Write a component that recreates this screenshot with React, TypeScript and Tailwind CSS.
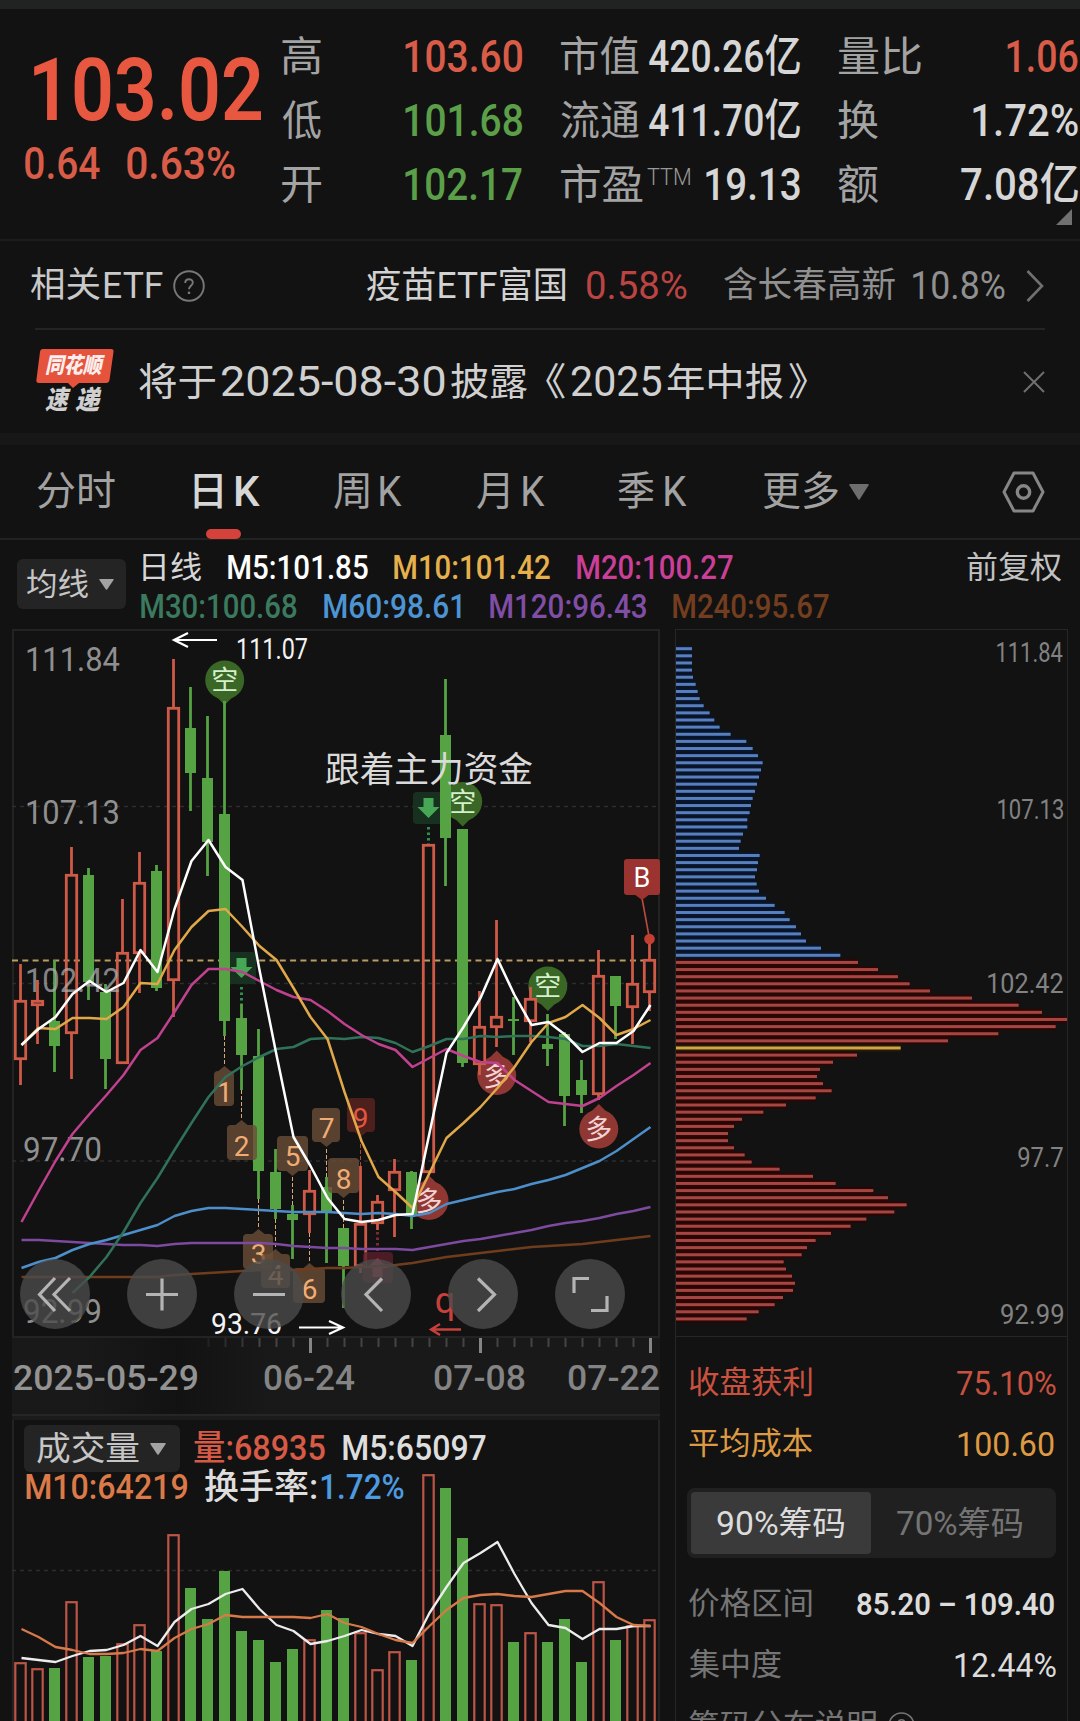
import React, { useLayoutEffect, useRef } from 'react';

/* Stretches a line of text horizontally so its ink fills the width of its box. */
function Fit({ className, children }: { className: string; children: string }) {
  const box = useRef<HTMLSpanElement>(null);
  const inner = useRef<HTMLSpanElement>(null);
  useLayoutEffect(() => {
    const b = box.current!;
    const t = inner.current!;
    const cs = getComputedStyle(t);
    const ctx = document.createElement('canvas').getContext('2d')!;
    ctx.font = `${cs.fontStyle} ${cs.fontWeight} ${cs.fontSize} ${cs.fontFamily}`;
    const m = ctx.measureText(children);
    const ink = m.actualBoundingBoxRight + m.actualBoundingBoxLeft;
    const s = b.clientWidth / ink;
    t.style.transform = `translateX(${m.actualBoundingBoxLeft * s}px) scaleX(${s})`;
  }, [children]);
  return (
    <span ref={box} className={`block shrink-0 whitespace-nowrap ${className}`}>
      <span ref={inner} className="inline-block origin-left">{children}</span>
    </span>
  );
}

const X0 = 20.5;
const STEP = 17;

type Candle = [up: number, high: number, top: number, bottom: number, low: number];
const candles: Candle[] = [
  [1, 964, 1000, 1060, 1085], [1, 980, 1000, 1006, 1044], [0, 960, 1021, 1046, 1072], [1, 847, 874, 1034, 1079],
  [0, 868, 875, 982, 1000], [0, 984, 992, 1059, 1089], [1, 899, 952, 1064, 1064], [1, 852, 882, 954, 993],
  [0, 865, 871, 988, 991], [1, 659, 707, 981, 1017], [0, 687, 728, 773, 811], [0, 716, 778, 842, 876],
  [0, 701, 814, 1021, 1036], [0, 1004, 1018, 1055, 1090], [0, 1029, 1056, 1171, 1199], [0, 1149, 1172, 1209, 1219],
  [0, 1205, 1214, 1220, 1259], [1, 1170, 1190, 1215, 1233], [0, 1177, 1187, 1213, 1263], [0, 1228, 1228, 1266, 1308],
  [1, 1166, 1223, 1267, 1273], [1, 1195, 1201, 1224, 1230], [1, 1159, 1171, 1191, 1237], [0, 1171, 1172, 1215, 1229],
  [1, 844, 844, 1173, 1173], [0, 679, 735, 838, 886], [0, 829, 829, 1063, 1067], [1, 991, 1026, 1065, 1075],
  [1, 920, 1016, 1028, 1047], [0, 997, 1019, 1021, 1055], [1, 987, 998, 1022, 1042], [0, 1014, 1044, 1049, 1066],
  [0, 1032, 1034, 1096, 1126], [0, 1060, 1080, 1095, 1113], [1, 950, 975, 1095, 1100], [0, 976, 976, 1006, 1039],
  [1, 935, 983, 1008, 1044], [1, 935, 959, 993, 1011],
];

const ma5 = [1045, 1029, 1017, 994, 981, 992, 983, 950, 972, 909, 861, 840, 867, 880, 970, 1055, 1137, 1166, 1198, 1219, 1222, 1220, 1215, 1214, 1133, 1053, 1027, 998, 959, 995, 1025, 1022, 1035, 1052, 1043, 1043, 1031, 1005];
const ma10 = [1045, 1028, 1029, 1018, 1018, 1019, 1007, 983, 984, 950, 927, 911, 909, 927, 946, 960, 988, 1017, 1039, 1092, 1141, 1177, 1192, 1208, 1173, 1138, 1123, 1107, 1088, 1067, 1042, 1023, 1017, 1005, 1018, 1035, 1029, 1020];
const ma20 = [1222, 1191, 1161, 1134, 1114, 1095, 1075, 1050, 1038, 1012, 985, 969, 969, 972, 981, 990, 997, 1000, 1011, 1024, 1035, 1044, 1050, 1067, 1058, 1049, 1056, 1062, 1063, 1080, 1091, 1102, 1104, 1106, 1098, 1086, 1075, 1063];
const ma30 = [1293, 1277, 1257, 1232, 1203, 1178, 1150, 1123, 1097, 1077, 1066, 1057, 1049, 1047, 1039, 1038, 1039, 1037, 1038, 1043, 1052, 1046, 1039, 1039, 1036, 1037, 1036, 1036, 1037, 1039, 1046, 1046, 1044, 1046, 1048];
const ma60 = [1268, 1262, 1258, 1250, 1244, 1240, 1235, 1230, 1225, 1216, 1211, 1208, 1208, 1209, 1210, 1211, 1212, 1212, 1212, 1213, 1214, 1213, 1214, 1216, 1213, 1204, 1200, 1196, 1192, 1189, 1184, 1180, 1175, 1168, 1161, 1151, 1139, 1127];
const ma120 = [1240, 1240, 1241, 1242, 1243, 1244, 1245, 1245, 1246, 1244, 1243, 1243, 1243, 1243, 1243, 1244, 1246, 1247, 1248, 1248, 1249, 1249, 1249, 1250, 1247, 1244, 1241, 1239, 1236, 1233, 1230, 1226, 1223, 1221, 1218, 1214, 1211, 1207];
const ma240 = [1277, 1277, 1277, 1277, 1277, 1277, 1277, 1277, 1277, 1275, 1274, 1273, 1272, 1271, 1270, 1270, 1270, 1269, 1268, 1268, 1267, 1266, 1265, 1263, 1260, 1257, 1255, 1253, 1251, 1249, 1247, 1246, 1245, 1244, 1242, 1240, 1238, 1236];

const volumes = [1662, 1668, 1668, 1601, 1657, 1656, 1643, 1624, 1651, 1534, 1588, 1619, 1571, 1631, 1640, 1662, 1649, 1639, 1610, 1618, 1632, 1669, 1651, 1660, 1474, 1488, 1538, 1603, 1604, 1642, 1632, 1642, 1619, 1662, 1581, 1640, 1625, 1619];
const vol5 = [1658, 1660, 1662, 1656, 1651, 1650, 1645, 1636, 1646, 1622, 1609, 1604, 1594, 1589, 1609, 1625, 1631, 1644, 1641, 1636, 1630, 1634, 1636, 1646, 1613, 1587, 1563, 1553, 1542, 1574, 1603, 1625, 1628, 1639, 1629, 1629, 1626, 1626];
const vol10 = [1629, 1637, 1647, 1650, 1654, 1654, 1653, 1649, 1651, 1638, 1629, 1624, 1615, 1617, 1617, 1617, 1617, 1618, 1614, 1623, 1627, 1634, 1640, 1643, 1626, 1610, 1598, 1595, 1594, 1596, 1597, 1594, 1591, 1591, 1603, 1617, 1625, 1626];

/* Chip distribution, bar ends in thirds of a pixel. */
const chips = [
  96, 96, 96, 96, 99, 107, 113, 119, 131, 149, 163, 179, 212, 259, 278, 294, 308, 303, 297, 291, 285, 278, 273, 269, 262, 262, 249, 242, 237, 299, 294, 291, 285, 290, 297, 318, 344, 374, 389, 408, 423, 438, 483, 541,
  594, 654, 714, 749, 810, 936, 1076, 1146, 1221, 1187, 1015, 864, 722,
  591, 519, 480, 471, 489, 515, 467, 378, 310, 246, 222, 204, 204, 222, 254, 275, 359, 459, 527, 640, 684, 740, 703, 619, 572, 513, 467, 441, 425, 371, 378, 396, 405, 399, 369, 344, 296, 260,
];

function Line({ data, color, start = 0, width = 2.5 }: { data: number[]; color: string; start?: number; width?: number }) {
  return (
    <polyline
      fill="none"
      stroke={color}
      strokeWidth={width}
      strokeLinejoin="round"
      points={data.map((y, i) => `${X0 + 1 + STEP * (i + start)},${y}`).join(' ')}
    />
  );
}

function T({ x, y, w, size, fill, weight = 400, children }: { x: number; y: number; w: number; size: number; fill: string; weight?: number; children: string }) {
  return (
    <text x={x - 2} y={y} textLength={w + 4} lengthAdjust="spacingAndGlyphs" fontSize={size} fontWeight={weight} fill={fill}>
      {children}
    </text>
  );
}

function Pin({ x, y, short }: { x: number; y: number; short?: boolean }) {
  const color = short ? '#3a6626' : '#8f3733';
  return (
    <g>
      <path fill={color} d={short ? `M${x - 9} ${y + 16}L${x} ${y + 25}L${x + 9} ${y + 16}z` : `M${x - 9} ${y - 16}L${x} ${y - 25}L${x + 9} ${y - 16}z`} />
      <circle cx={x} cy={y} r={19.5} fill={color} />
      <text x={x} y={y + 10} textAnchor="middle" fontSize={27} fill={short ? '#d5f0cc' : '#f3d3d3'}>
        {short ? '空' : '多'}
      </text>
    </g>
  );
}

type Mark = { n: string; l: number; r: number; t: number; b: number; cx: number; from: number; base: number; up?: boolean; red?: boolean };
const marks: Mark[] = [
  { n: '1', l: 214, r: 234, t: 1071, b: 1106, cx: 224.5, from: 1036, base: 1102, up: true },
  { n: '2', l: 227, r: 257, t: 1125, b: 1160, cx: 241.5, from: 1090, base: 1156, up: true },
  { n: '3', l: 243, r: 273, t: 1234, b: 1269, cx: 258.5, from: 1199, base: 1264, up: true },
  { n: '4', l: 261, r: 290, t: 1254, b: 1288, cx: 275.5, from: 1219, base: 1285, up: true },
  { n: '5', l: 277, r: 308, t: 1136, b: 1171, cx: 292.5, from: 1205, base: 1166 },
  { n: '6', l: 293, r: 325, t: 1268, b: 1303, cx: 309.5, from: 1233, base: 1299, up: true },
  { n: '7', l: 312, r: 340, t: 1108, b: 1142, cx: 326.5, from: 1177, base: 1138 },
  { n: '8', l: 328, r: 359, t: 1158, b: 1193, cx: 343.5, from: 1228, base: 1189 },
  { n: '9', l: 347, r: 375, t: 1098, b: 1132, cx: 360.5, from: 1166, base: 1128, red: true },
];

function NumberMark({ m }: { m: Mark }) {
  const bg = m.red ? '#5c2320' : '#6b4e37';
  const tip = m.up ? m.t - 5 : m.b + 5;
  const edge = m.up ? m.t : m.b;
  return (
    <g>
      <line x1={m.cx} x2={m.cx} y1={m.from} y2={tip} stroke={m.red ? '#a8483a' : '#d9a878'} strokeWidth={1} strokeDasharray="4 2" />
      <g fill={bg} fillOpacity={0.8}>
        <path d={`M${m.cx - 6} ${edge}L${m.cx} ${tip}L${m.cx + 6} ${edge}z`} />
        <rect x={m.l} y={m.t} width={m.r - m.l} height={m.b - m.t} rx={4} />
      </g>
      <text x={m.cx} y={m.base} textAnchor="middle" fontSize={28} fill={m.red ? '#e4573e' : '#efad75'}>{m.n}</text>
    </g>
  );
}

function DownFlag({ x, y, w }: { x: number; y: number; w: number }) {
  return (
    <g>
      <rect x={x - w / 2} y={y} width={w} height={32} rx={4} fill="#18301f" />
      <path fill="#46a755" d={`M${x - 5} ${y + 6}h10v9h6L${x} ${y + 26}L${x - 11} ${y + 15}h6z`} />
      <line x1={x} x2={x} y1={y + 35} y2={y + 52} stroke="#2f8f50" strokeWidth={3} strokeDasharray="2.5 3" />
    </g>
  );
}

function PriceChart() {
  return (
    <svg className="block h-[708px] w-[648px]" viewBox="12 629 648 708" fontFamily='Roboto, "Noto Sans CJK SC", sans-serif'>
      <g stroke="#2d2d2d" strokeWidth={1.5} strokeDasharray="4 4">
        <line x1={12} x2={660} y1={806.5} y2={806.5} />
        <line x1={12} x2={660} y1={983.5} y2={983.5} />
        <line x1={12} x2={660} y1={1161} y2={1161} />
      </g>
      <line x1={12} x2={645} y1={960.5} y2={960.5} stroke="#b99c62" strokeWidth={1.8} strokeDasharray="6 4.3" />

      <Pin x={224.7} y={680} short />
      <Pin x={462.7} y={801.5} short />
      <Pin x={547.8} y={986} short />
      <Pin x={496.7} y={1075.5} />
      <Pin x={598.8} y={1129} />
      <Pin x={429} y={1200.5} />
      <DownFlag x={428.5} y={792} w={31} />
      <DownFlag x={241.5} y={952} w={29} />

      {candles.map(([up, high, top, bottom, low], i) => {
        const x = X0 + STEP * i;
        return up ? (
          <g key={i} stroke="#cf5a47" strokeWidth={2.8} fill="none">
            {high < top && <line x1={x} x2={x} y1={high} y2={top} />}
            {low > bottom && <line x1={x} x2={x} y1={bottom} y2={low} />}
            <rect x={x - 5.2} y={top + 1.3} width={10.4} height={Math.max(bottom - top - 2.6, 2)} />
          </g>
        ) : (
          <g key={i} fill="#56a344">
            <rect x={x - 1.4} y={high} width={2.8} height={low - high} />
            <rect x={x - 5.5} y={top} width={11} height={bottom - top} />
          </g>
        );
      })}

      <line x1={377.5} x2={377.5} y1={1232} y2={1251} stroke="#7d2a35" strokeWidth={3} strokeDasharray="2.5 3" />
      <rect x={363} y={1252} width={30} height={31} rx={4} fill="#5a1f2b" fillOpacity={0.8} />
      <path fill="#b03a4c" d="M377.5 1258l11 10h-6v9h-10v-9h-6z" />

      <T x={27} y={671} w={91} size={34} fill="#8f8f8f">111.84</T>
      <T x={27} y={824} w={91} size={34} fill="#8f8f8f">107.13</T>
      <g opacity={0.75}><T x={27} y={992} w={91} size={34} fill="#ababab">102.42</T></g>
      <T x={25} y={1161} w={75} size={34} fill="#8f8f8f">97.70</T>
      <T x={25} y={1323} w={75} size={34} fill="#8f8f8f">92.99</T>

      {marks.map((m) => <NumberMark key={m.n} m={m} />)}

      <Line data={ma240} color="#6f3d1e" />
      <Line data={ma120} color="#7c4a9e" />
      <Line data={ma60} color="#4d8fca" />
      <Line data={ma30} color="#2f7259" start={3} />
      <Line data={ma20} color="#c0428f" />
      <Line data={ma10} color="#e0a848" />
      <Line data={ma5} color="#ffffff" />

      <T x={327} y={782} w={204} size={35} fill="#dadada">跟着主力资金</T>
      <path d="M217 640H174M188 633L174 640L188 647" stroke="#fff" strokeWidth={2.2} fill="none" />
      <T x={238} y={659} w={68} size={29.5} fill="#f4f4f4">111.07</T>
      <path d="M299 1327.5H343M329 1321L343 1327.5L329 1334" stroke="#fff" strokeWidth={2.2} fill="none" />
      <T x={213} y={1334} w={67} size={29.5} fill="#f4f4f4">93.76</T>

      <path d="M642 898L649.5 939" stroke="#bd4a3e" strokeWidth={1.6} />
      <circle cx={649.5} cy={939} r={5.3} fill="#c33e33" />
      <rect x={624} y={859} width={36} height={36} rx={3} fill="#9b3431" />
      <path d="M634 894L642 900L650 894z" fill="#9b3431" />
      <text x={642} y={887} textAnchor="middle" fontSize={27} fill="#fff">B</text>

      <text x={445} y={1313} textAnchor="middle" fontSize={36} fill="#c8403a">q</text>
      <path d="M461 1329.5H432M440 1324L431 1329.5L440 1335" stroke="#c8403a" strokeWidth={2.4} fill="none" />

      <g fill="#4b4b4b" fillOpacity={0.8}>
        {[55, 162, 269, 376, 483, 590].map((x) => <circle key={x} cx={x} cy={1294} r={35} />)}
      </g>
      <g stroke="#b4b4b4" strokeWidth={3.2} fill="none">
        <path d="M55 1278L39.5 1294.5L55 1311M70 1278L54 1294.5L70 1311" />
        <path d="M146 1294.5H178M162 1278.5V1310.5M253 1294.5H285" />
        <path d="M382 1278.5L366 1294.5L382 1311M478 1278.5L494.5 1294.5L478 1311" />
        <path d="M574 1293V1278.5H589M607 1296V1310.5H591" />
      </g>
    </svg>
  );
}

function VolumeChart() {
  return (
    <svg className="block h-[306px] w-[648px]" viewBox="12 1415 648 306">
      <line x1={12} x2={660} y1={1570.5} y2={1570.5} stroke="#2d2d2d" strokeWidth={1.5} strokeDasharray="4 4" />
      {volumes.map((y, i) => {
        const x = X0 + STEP * i;
        return candles[i][0] ? (
          <rect key={i} x={x - 5.2} y={y + 1.2} width={10.4} height={80 + 1721 - y} fill="none" stroke="#bd5546" strokeWidth={2.2} />
        ) : (
          <rect key={i} x={x - 5.5} y={y} width={11} height={1721 - y} fill="#56a344" />
        );
      })}
      <Line data={vol5} color="#ececec" width={2.3} />
      <Line data={vol10} color="#d8794a" width={2.3} />
    </svg>
  );
}

function ChipChart() {
  return (
    <svg className="absolute inset-0 h-[706px] w-[391px]" viewBox="676 630 391 706">
      {chips.map((end, i) => {
        const y = 648.7 + i * 7.13;
        const w = end / 3 - 16;
        const bar = i < 44 ? '#587fbd' : i === 56 ? '#cfa545' : '#a54642';
        const halo = i < 44 ? '#08152a' : i === 56 ? '#251a06' : '#2a0705';
        return (
          <g key={i}>
            <rect x={676} y={y - 3.5} width={w} height={7.2} fill={halo} />
            <rect x={676} y={y - 1.5} width={w} height={3} fill={bar} />
          </g>
        );
      })}
    </svg>
  );
}

function Stat({ label, lw, value, vw, tone, sup }: { label: string; lw: string; value: string; vw: string; tone: string; sup?: boolean }) {
  return (
    <div className="flex h-16 items-center justify-between">
      <div className="flex items-center">
        <Fit className={`text-[41px] leading-none text-[#a3a3a3] ${lw}`}>{label}</Fit>
        {sup && <Fit className="mb-[15px] ml-1 w-[43px] text-[23px] font-light leading-none text-[#999]">TTM</Fit>}
      </div>
      <Fit className={`text-[44px] font-medium leading-none ${tone} ${vw}`}>{value}</Fit>
    </div>
  );
}

function Caret({ className }: { className: string }) {
  return <svg className={className} viewBox="0 0 20 16" preserveAspectRatio="none"><path d="M1 0h18q1 0 .6 1.2L10.8 15.3q-.8 1-1.6 0L.4 1.2Q0 0 1 0z" fill="currentColor" /></svg>;
}

function Help({ className }: { className: string }) {
  return (
    <svg className={className} viewBox="0 0 32 32" fill="none" stroke="currentColor" strokeWidth={1.9}>
      <circle cx={16} cy={16} r={14.8} />
      <path d="M12.2 13c0-5 7.6-5 7.6-.4 0 3-3.8 3.400-3.8 6.600" />
      <path d="M16 21.600v2.400" strokeWidth={2.4} />
    </svg>
  );
}

function Header() {
  return (
    <section className="flex h-[232px] border-b-2 border-[#1d1d1d]">
      <div className="flex w-[282px] flex-col pt-[36px]">
        <Fit className="ml-[34px] w-[227px] text-[88px] font-semibold leading-[90px] text-[#e8573f]">103.02</Fit>
        <div className="mt-1 flex h-[48px] items-center">
          <Fit className="ml-[25px] w-[75px] text-[45px] font-medium leading-none text-[#d85c48]">0.64</Fit>
          <Fit className="ml-[27px] w-[108px] text-[45px] font-medium leading-none text-[#d85c48]">0.63%</Fit>
        </div>
      </div>
      <div className="w-[240px] pt-4">
        <Stat label="高" lw="w-[39px]" value="103.60" vw="w-[117px]" tone="text-[#d85c48]" />
        <Stat label="低" lw="w-[39px]" value="101.68" vw="w-[117px]" tone="text-[#5ba049]" />
        <Stat label="开" lw="w-[39px]" value="102.17" vw="w-[117px]" tone="text-[#5ba049]" />
      </div>
      <div className="ml-[39px] w-[239px] pt-4">
        <Stat label="市值" lw="w-[78px]" value="420.26亿" vw="w-[151px]" tone="text-[#d6d6d6]" />
        <Stat label="流通" lw="w-[78px]" value="411.70亿" vw="w-[151px]" tone="text-[#d6d6d6]" />
        <Stat label="市盈" lw="w-[82px]" value="19.13" vw="w-[94px]" tone="text-[#d6d6d6]" sup />
      </div>
      <div className="relative ml-[38px] w-[240px] pt-4">
        <Stat label="量比" lw="w-[83px]" value="1.06" vw="w-[71px]" tone="text-[#d85c48]" />
        <Stat label="换" lw="w-[40px]" value="1.72%" vw="w-[105px]" tone="text-[#d6d6d6]" />
        <Stat label="额" lw="w-[40px]" value="7.08亿" vw="w-[117px]" tone="text-[#d6d6d6]" />
        <svg className="absolute right-[6px] top-[200px] h-4 w-4" viewBox="0 0 16 16"><path d="M16 0V16H0z" fill="#707070" /></svg>
      </div>
    </section>
  );
}

function EtfRow() {
  return (
    <section className="flex h-[87px] items-center pl-[31px] pt-[2px]">
      <Fit className="w-[69px] text-[35px] leading-none text-[#c9c9c9]">相关</Fit>
      <Fit className="ml-[5px] w-[58px] text-[37px] leading-none text-[#c9c9c9]">ETF</Fit>
      <Help className="ml-[10px] h-[32px] w-[32px] text-[#777]" />
      <Fit className="ml-[162px] w-[198px] text-[36px] leading-none text-[#d2d2d2]">疫苗ETF富国</Fit>
      <Fit className="ml-[22px] w-[100px] text-[38px] leading-none text-[#bb4443]">0.58%</Fit>
      <Fit className="ml-[37px] w-[171px] text-[35px] leading-none text-[#909090]">含长春高新</Fit>
      <Fit className="ml-[18px] w-[92px] text-[38px] leading-none text-[#909090]">10.8%</Fit>
      <svg className="ml-[21px] h-[34px] w-[18px]" viewBox="0 0 18 34" fill="none" stroke="#707070" strokeWidth={2.6}><path d="M1.500 2L16 17L1.500 32" /></svg>
    </section>
  );
}

function NoticeRow() {
  return (
    <section className="mx-[35px] flex h-[105px] border-t-2 border-[#242424]">
      <div className="relative w-[104px]">
        <svg className="absolute left-[1px] top-[19px] h-[39px] w-[78px]" viewBox="0 0 78 39"><path d="M7 0H75q3 0 2.500 3L73.500 31q-.5 3-3.500 3H43l-6 5-5-5H3q-3 0-2.600-3L4 3q.4-3 3-3z" fill="#e6533c" /></svg>
        <Fit className="absolute left-[10px] top-[23px] w-[60px] text-[22px] font-black italic leading-[26px] text-[#fbeeec]">同花顺</Fit>
        <Fit className="absolute left-[10px] top-[57px] w-[26px] text-[26px] font-black italic leading-[26px] text-[#cfcfcf]">速</Fit>
        <Fit className="absolute left-[40px] top-[57px] w-[27px] text-[26px] font-black italic leading-[26px] text-[#cfcfcf]">递</Fit>
      </div>
      <div className="flex h-[103px] flex-1 items-center text-[#d0d0d0]">
        <Fit className="w-[76px] text-[38px] leading-none">将于</Fit>
        <Fit className="ml-[6px] w-[224px] text-[42px] leading-none">2025-08-30</Fit>
        <Fit className="ml-[6px] w-[76px] text-[38px] leading-none">披露</Fit>
        <Fit className="ml-[19px] w-[19px] text-[38px] leading-none">《</Fit>
        <Fit className="ml-[6px] w-[90px] text-[42px] leading-none">2025</Fit>
        <Fit className="ml-[6px] w-[116px] text-[38px] leading-none">年中报</Fit>
        <Fit className="ml-[6px] w-[18px] text-[38px] leading-none">》</Fit>
        <svg className="ml-auto h-[22px] w-[22px]" viewBox="0 0 22 22" stroke="#6f6f6f" strokeWidth={2}><path d="M1 1L21 21M21 1L1 21" /></svg>
      </div>
    </section>
  );
}

function Tabs() {
  const tab = 'text-[40px] leading-none';
  const letter = 'text-[42px] leading-none w-[22px] ml-[11px]';
  return (
    <nav className="flex h-[95px] items-center border-b-2 border-[#222] pl-[37px] pt-[1px] text-[#a2a2a2]">
      <Fit className={`${tab} w-[78px]`}>分时</Fit>
      <div className="relative ml-[79px] flex text-[#d6d6d6]">
        <Fit className={`${tab} w-[28px] font-medium`}>日</Fit>
        <Fit className="ml-[14px] w-[24px] text-[42px] font-medium leading-[40px]">K</Fit>
        <span className="absolute left-[12px] top-[57px] h-[10px] w-[35px] rounded-full bg-[#d5423c]" />
      </div>
      <Fit className={`${tab} ml-[74px] w-[35px]`}>周</Fit>
      <Fit className={letter}>K</Fit>
      <Fit className={`${tab} ml-[75px] w-[31px]`}>月</Fit>
      <Fit className={`${letter} ml-[15px]`}>K</Fit>
      <Fit className={`${tab} ml-[73px] w-[36px]`}>季</Fit>
      <Fit className={letter}>K</Fit>
      <Fit className={`${tab} ml-[76px] w-[75px]`}>更多</Fit>
      <Caret className="ml-[11px] h-[16px] w-[20px] text-[#6e6e6e]" />
      <svg className="ml-auto mr-[35px] h-[42px] w-[43px]" viewBox="0 0 43 42" fill="none" stroke="#868686" strokeWidth={3} strokeLinejoin="round">
        <path d="M12 2H31L41 21L31 40H12L2 21z" />
        <circle cx={21.500} cy={21} r={6.200} strokeWidth={3.400} />
      </svg>
    </nav>
  );
}

function MovingAverages() {
  const row = 'flex h-[39px] items-center text-[33px] font-medium leading-none';
  return (
    <section className="flex h-[89px] pl-[17px] pt-[7px]">
      <div className="mt-[12px] flex h-[50px] w-[109px] items-center rounded-md bg-[#242424] pl-[10px]">
        <Fit className="w-[61px] text-[31px] leading-none text-[#c6c6c6]">均线</Fit>
        <Caret className="ml-[11px] h-[11px] w-[15px] text-[#a3a3a3]" />
      </div>
      <div className="ml-[15px] pt-[1px]">
        <div className={row}>
          <Fit className="ml-[2px] w-[58px] text-[31px] font-normal text-[#d6d6d6]">日线</Fit>
          <Fit className="ml-[27px] w-[140px] text-white">M5:101.85</Fit>
          <Fit className="ml-[26px] w-[156px] text-[#e6b04c]">M10:101.42</Fit>
          <Fit className="ml-[27px] w-[156px] text-[#cb3f98]">M20:100.27</Fit>
        </div>
        <div className={row}>
          <Fit className="w-[156px] text-[#3b7a5e]">M30:100.68</Fit>
          <Fit className="ml-[27px] w-[137px] text-[#4d94d2]">M60:98.61</Fit>
          <Fit className="ml-[29px] w-[156px] text-[#814ea6]">M120:96.43</Fit>
          <Fit className="ml-[27px] w-[156px] text-[#733e1f]">M240:95.67</Fit>
        </div>
      </div>
      <Fit className="ml-[138px] mt-[4px] w-[94px] text-[31px] leading-[34px] text-[#c2c2c2]">前复权</Fit>
    </section>
  );
}

function DateAxis() {
  const ticks = Array.from({ length: 27 }, (_, i) => i);
  return (
    <div className="relative h-[76px] bg-[#191919]">
      <div className="absolute inset-y-0 left-[70px] w-[190px] bg-gradient-to-r from-[#191919] via-[#121212] to-[#191919]" />
      <svg className="absolute left-0 top-0 h-4 w-[650px]" viewBox="12 1338 650 16">
        {ticks.map((i) => {
          const major = i === 6 || i === 16 || i === 26;
          return <rect key={i} x={(major ? 207 : 207.500) + i * 17} y={1338} width={major ? 3 : 2} height={major ? 15 : 9} fill={major ? '#858585' : '#444'} fillOpacity={i < 3 && !major ? 0.3 + i * 0.2 : 1} />;
        })}
      </svg>
      <div className="relative flex items-center pt-[23px] text-[35px] font-medium leading-[36px] text-[#848484]">
        <Fit className="ml-[2px] w-[183px] text-[#939393]">2025-05-29</Fit>
        <Fit className="ml-[67px] w-[91px]">06-24</Fit>
        <Fit className="ml-[79px] w-[91px]">07-08</Fit>
        <Fit className="ml-[43px] w-[91px]">07-22</Fit>
      </div>
    </div>
  );
}

function VolumePanel() {
  const cell = 'text-[35px] font-medium leading-none';
  return (
    <div className="relative h-[307px] border-t-2 border-[#262626]">
      <div className="h-[4px] bg-[#1b1b1b]" />
      <div className="absolute left-0 top-[-1px]"><VolumeChart /></div>
      <div className="relative mt-[5px] flex h-[47px] items-center pl-[12px]">
        <div className="flex h-[47px] w-[156px] items-center rounded-md bg-[#242424] pl-[13px]">
          <Fit className="w-[102px] text-[33px] leading-none text-[#c6c6c6]">成交量</Fit>
          <Caret className="ml-[11px] h-[12px] w-[16px] text-[#a3a3a3]" />
        </div>
        <Fit className={`${cell} ml-[14px] w-[131px] text-[#d65a45]`}>量:68935</Fit>
        <Fit className={`${cell} ml-[18px] w-[143px] text-[#dedede]`}>M5:65097</Fit>
      </div>
      <div className="relative flex h-[31px] items-center pl-[14px]">
        <Fit className={`${cell} w-[161px] text-[#db7a48]`}>M10:64219</Fit>
        <Fit className={`${cell} ml-[18px] w-[111px] text-[#dedede]`}>换手率:</Fit>
        <Fit className={`${cell} ml-[5px] w-[83px] text-[#4c9be0]`}>1.72%</Fit>
      </div>
    </div>
  );
}

function ChipPanel() {
  const label = 'text-[28px] leading-[30px]';
  const name = 'text-[31px] leading-none';
  return (
    <aside className="ml-[15px] w-[393px] border-x border-t border-[#262626]">
      <div className="relative h-[706px]">
        <ChipChart />
        <div className="relative flex flex-col items-end pr-[4px] pt-[8px] text-[#828282]">
          <Fit className={`${label} w-[66px]`}>111.84</Fit>
          <Fit className={`${label} mt-[127px] w-[65px]`}>107.13</Fit>
          <Fit className={`${label} mt-[144px] w-[75px]`}>102.42</Fit>
          <Fit className={`${label} mt-[144px] w-[45px]`}>97.7</Fit>
          <Fit className={`${label} mt-[127px] w-[62px]`}>92.99</Fit>
        </div>
      </div>
      <div className="border-t border-[#262626] pl-[11px] pr-[11px] pt-[15px]">
        <div className="flex h-[61px] items-center justify-between pl-[2px] text-[#c9513f]">
          <Fit className={`${name} w-[123px]`}>收盘获利</Fit>
          <Fit className="w-[99px] text-[34px] leading-none">75.10%</Fit>
        </div>
        <div className="flex h-[61px] items-center justify-between pl-[2px] pr-[2px] text-[#dd9a42]">
          <Fit className={`${name} w-[123px]`}>平均成本</Fit>
          <Fit className="w-[96px] text-[34px] leading-none">100.60</Fit>
        </div>
        <div className="mt-[14px] flex h-[70px] rounded-lg bg-[#202020] p-1">
          <div className="flex w-[180px] items-center justify-center rounded bg-[#3a3a3a] text-[#dcdcdc]">
            <Fit className="w-[128px] text-[33px] leading-none">90%筹码</Fit>
          </div>
          <div className="flex flex-1 items-center justify-center pr-[3px] text-[#747474]">
            <Fit className="w-[126px] text-[33px] leading-none">70%筹码</Fit>
          </div>
        </div>
        <div className="mt-[15px] flex h-[61px] items-center justify-between pl-[2px] pr-[2px]">
          <Fit className={`${name} w-[123px] text-[#757575]`}>价格区间</Fit>
          <Fit className="w-[197px] text-[32px] font-semibold leading-none text-[#dcdcdc]">85.20 – 109.40</Fit>
        </div>
        <div className="flex h-[61px] items-center justify-between pl-[2px]">
          <Fit className={`${name} w-[92px] text-[#757575]`}>集中度</Fit>
          <Fit className="w-[101px] text-[34px] leading-none text-[#dcdcdc]">12.44%</Fit>
        </div>
        <div className="flex h-[61px] items-center pl-[2px] text-[#757575]">
          <Fit className={`${name} w-[187px]`}>筹码分布说明</Fit>
          <Help className="ml-[12px] h-[27px] w-[27px]" />
        </div>
      </div>
    </aside>
  );
}

export default function App() {
  return (
    <main className="h-[1721px] w-[1080px] overflow-hidden bg-[#121212] font-[Roboto,'Noto_Sans_CJK_SC',sans-serif]">
      <div className="h-[9px] bg-[#202322]" />
      <Header />
      <EtfRow />
      <NoticeRow />
      <div className="h-[12px] bg-[#171717]" />
      <Tabs />
      <MovingAverages />
      <div className="flex pl-3">
        <div className="w-[648px]">
          <div className="h-[709px] shadow-[inset_0_0_0_2px_#232323]"><PriceChart /></div>
          <DateAxis />
          <div className="shadow-[inset_2px_0_0_#232323,inset_-2px_0_0_#232323]"><VolumePanel /></div>
        </div>
        <ChipPanel />
      </div>
    </main>
  );
}
